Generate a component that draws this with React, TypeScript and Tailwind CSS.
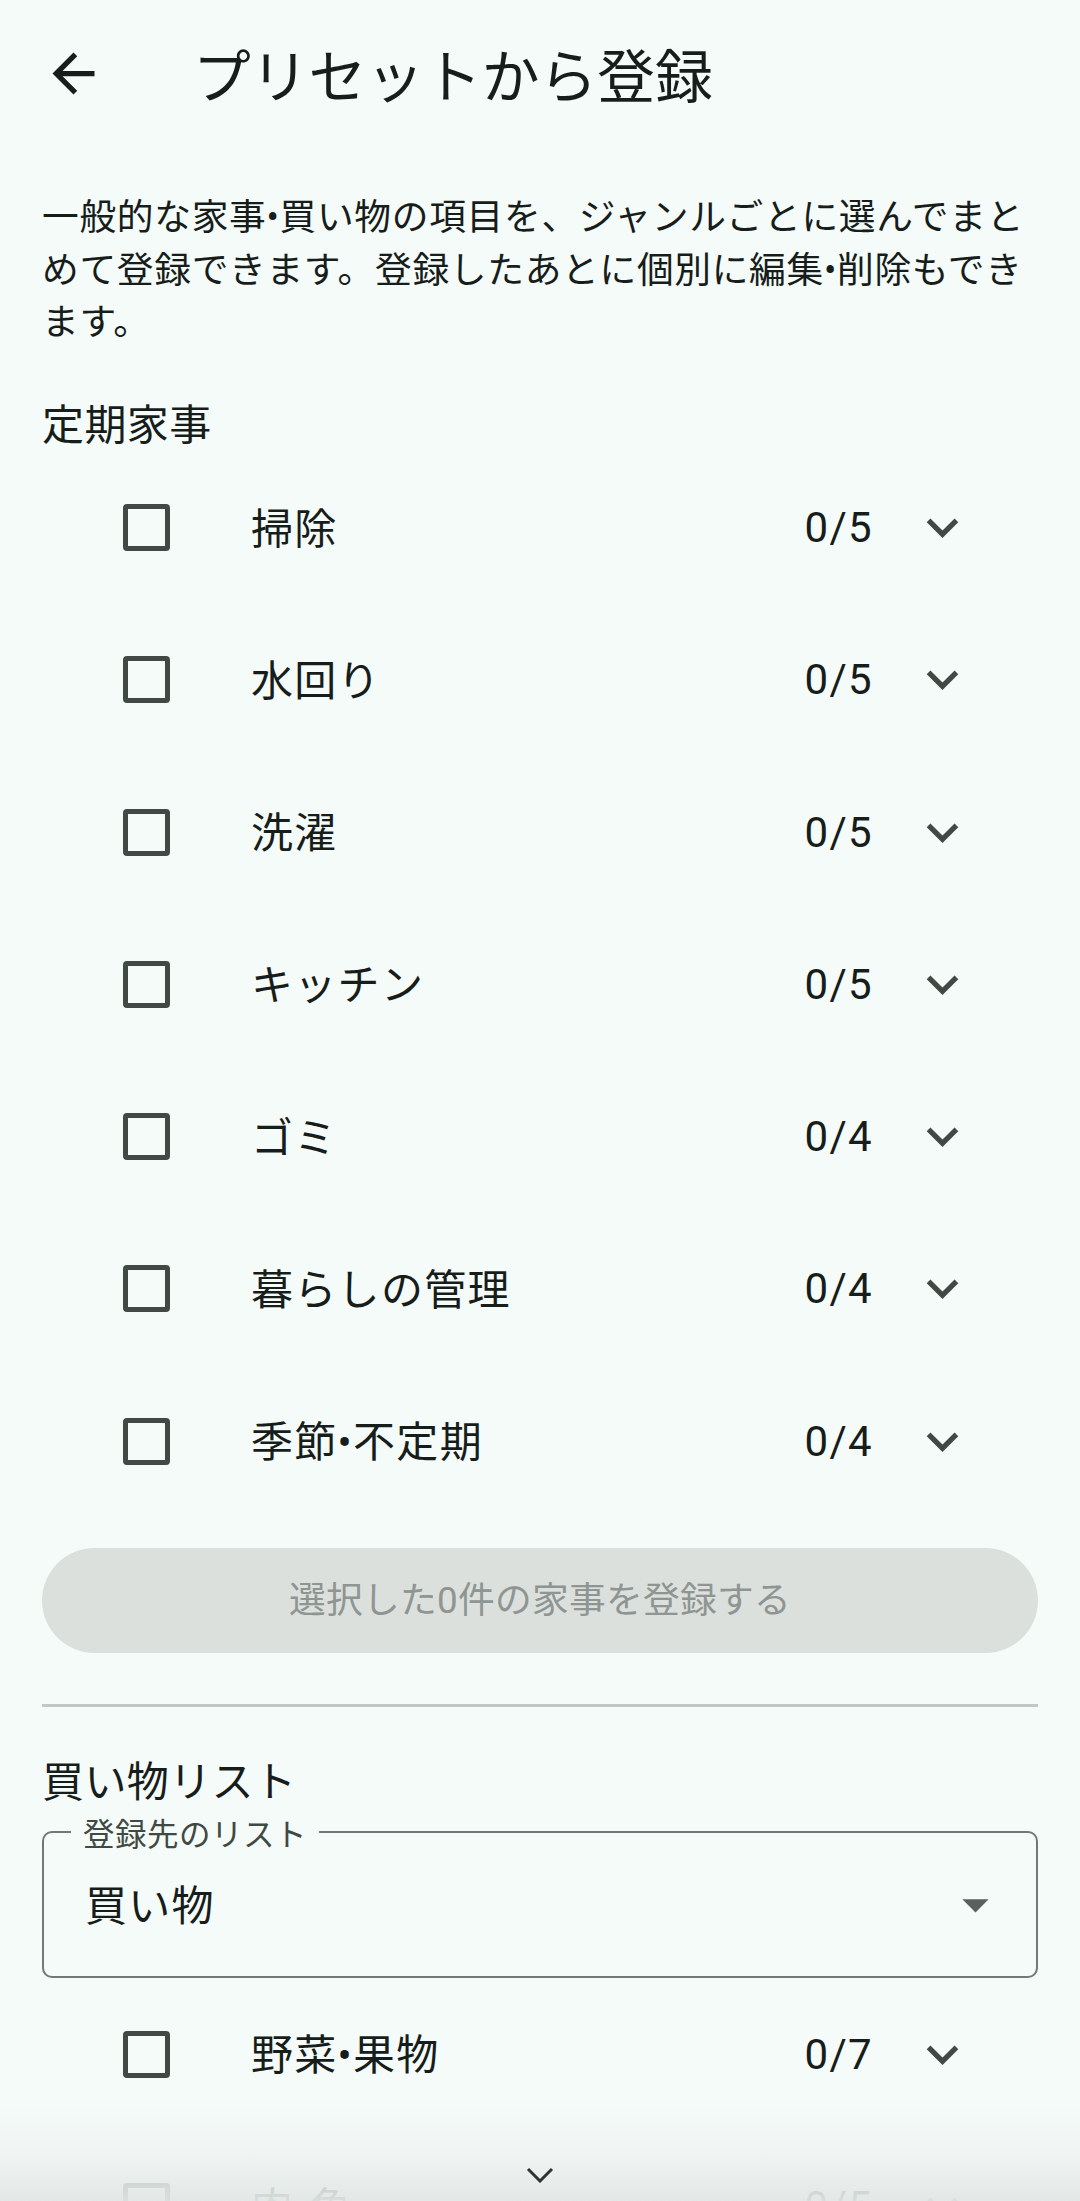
import type { ReactNode } from "react";

type Preset = { label: string; count: string };

const chores: Preset[] = [
  { label: "掃除", count: "0/5" },
  { label: "水回り", count: "0/5" },
  { label: "洗濯", count: "0/5" },
  { label: "キッチン", count: "0/5" },
  { label: "ゴミ", count: "0/4" },
  { label: "暮らしの管理", count: "0/4" },
  { label: "季節•不定期", count: "0/4" },
];

const shopping: Preset[] = [
  { label: "野菜•果物", count: "0/7" },
  { label: "肉•魚", count: "0/5" },
];

function ExpandMore() {
  return (
    <svg viewBox="0 0 24 24" className="ml-[38px] h-[63px] w-[63px] shrink-0" fill="#404944">
      <path d="M16.59 8.59L12 13.17 7.41 8.59 6 10l6 6 6-6z" />
    </svg>
  );
}

function PresetRow({ label, count }: Preset) {
  return (
    <div className="flex h-[152.25px] items-center pl-[123px] pr-[106px]">
      <span className="h-[47px] w-[47px] shrink-0 rounded-[4px] border-[5px] border-[#404944]" />
      <span className="ml-[81px] flex-1 pt-[3px] text-[42px] leading-[53px] tracking-[1.3px]">{label}</span>
      <span className="text-[42px] leading-[53px] tracking-[1.3px]">{count}</span>
      <ExpandMore />
    </div>
  );
}

function SectionTitle({ children, className }: { children: ReactNode; className: string }) {
  return <h2 className={`px-[42px] text-[42px] leading-[53px] tracking-[0.4px] ${className}`}>{children}</h2>;
}

export default function App() {
  return (
    <div className="relative h-[2201px] w-[1080px] overflow-hidden bg-[#f5fbf8] font-[Roboto,'Noto_Sans_CJK_JP',sans-serif] text-[#171d1b]">
      <header className="flex h-[147px] items-center pl-[42px]">
        <svg viewBox="0 0 24 24" className="h-[63px] w-[63px]" fill="#171d1b">
          <path d="M20 11H7.83l5.59-5.59L12 4l-8 8 8 8 1.41-1.41L7.83 13H20v-2z" />
        </svg>
        <h1 className="ml-[88px] pt-[11px] text-[57.75px] leading-none">プリセットから登録</h1>
      </header>

      <p className="mt-[45px] px-[42px] text-[36.75px] leading-[52.5px] tracking-[0.66px]">
        一般的な家事•買い物の項目を、ジャンルごとに選んでまとめて登録できます。登録したあとに個別に編集•削除もできます。
      </p>

      <SectionTitle className="mt-[49px]">定期家事</SectionTitle>
      <div>
        {chores.map((c) => (
          <PresetRow key={c.label} {...c} />
        ))}
      </div>

      <div className="mx-[42px] mt-[31px] flex h-[105px] items-center justify-center rounded-full bg-[#dbe0dd]">
        <span className="text-[36.75px] tracking-[0.26px] text-[#8f9592]">選択した0件の家事を登録する</span>
      </div>

      <div className="mx-[42px] mt-[51px] h-[3px] bg-[#bfc9c4]" />

      <SectionTitle className="mt-[49px]">買い物リスト</SectionTitle>

      <div className="relative mx-[42px] mt-[22px] flex h-[147px] items-center rounded-[10px] border-[2.6px] border-[#6f7975] pl-[41px] pr-[29px]">
        <span className="absolute left-[27px] top-[-15px] bg-[#f5fbf8] px-[12px] text-[31.5px] leading-[36px] tracking-[0.5px] text-[#404944]">
          登録先のリスト
        </span>
        <span className="flex-1 pt-[4px] text-[42px] leading-[53px] tracking-[1.3px]">買い物</span>
        <svg viewBox="0 0 24 24" className="h-[63px] w-[63px]" fill="#5b5f5e">
          <path d="M7 10l5 5 5-5z" />
        </svg>
      </div>

      <div>
        {shopping.map((c) => (
          <PresetRow key={c.label} {...c} />
        ))}
      </div>

      <div className="absolute bottom-0 left-0 flex h-[95px] w-full items-end justify-center bg-gradient-to-b from-[#f5fbf8]/0 via-[#eef3f1]/75 to-[#e2e7e5]/95 pb-[18px]">
        <svg viewBox="0 0 28 16" className="h-[16px] w-[28px]" fill="none" stroke="#2f3533" strokeWidth="3">
          <path d="M2 2l12 12 12-12" />
        </svg>
      </div>
    </div>
  );
}
